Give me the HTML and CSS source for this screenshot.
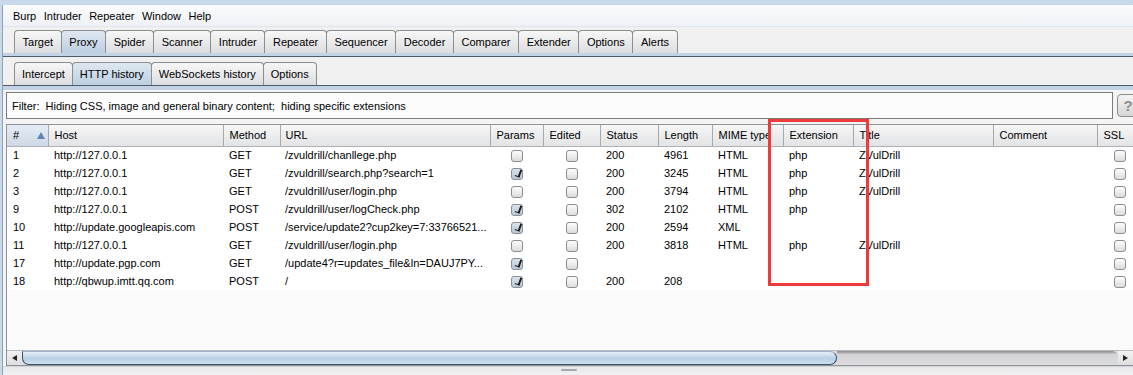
FILE: index.html
```html
<!DOCTYPE html>
<html lang="en">
<head>
    <meta charset="UTF-8">
    <title>Burp Suite - Proxy</title>
    <link rel="stylesheet" href="styles.css">
</head>
<body>
    <div class="frame">
        <div class="menubar">
            <span>Burp</span>
            <span>Intruder</span>
            <span>Repeater</span>
            <span>Window</span>
            <span>Help</span>
        </div>

        <div class="tabs main-tabs">
            <div class="tab">Target</div>
            <div class="tab active">Proxy</div>
            <div class="tab">Spider</div>
            <div class="tab">Scanner</div>
            <div class="tab">Intruder</div>
            <div class="tab">Repeater</div>
            <div class="tab">Sequencer</div>
            <div class="tab">Decoder</div>
            <div class="tab">Comparer</div>
            <div class="tab">Extender</div>
            <div class="tab">Options</div>
            <div class="tab">Alerts</div>
        </div>
        <div class="band band-main"></div>

        <div class="panel">
            <div class="tabs sub-tabs">
                <div class="tab">Intercept</div>
                <div class="tab active">HTTP history</div>
                <div class="tab">WebSockets history</div>
                <div class="tab">Options</div>
            </div>
            <div class="band band-sub"></div>

            <div class="filter-row">
                <div class="filter">Filter:&nbsp; Hiding CSS, image and general binary content;&nbsp; hiding specific extensions</div>
                <div class="help">?</div>
            </div>

            <div class="table-wrap">
                <div class="table-view">
                    <table class="history">
                        <colgroup>
                            <col class="c-num"><col class="c-host"><col class="c-method"><col class="c-url">
                            <col class="c-params"><col class="c-edited"><col class="c-status"><col class="c-length">
                            <col class="c-mime"><col class="c-ext"><col class="c-title"><col class="c-comment"><col class="c-ssl">
                        </colgroup>
                        <thead>
                            <tr>
                                <th class="sorted"># <span class="sort-arrow"></span></th>
                                <th>Host</th>
                                <th>Method</th>
                                <th class="url">URL</th>
                                <th>Params</th>
                                <th>Edited</th>
                                <th>Status</th>
                                <th>Length</th>
                                <th>MIME type</th>
                                <th>Extension</th>
                                <th>Title</th>
                                <th>Comment</th>
                                <th>SSL</th>
                            </tr>
                        </thead>
                        <tbody>
                            <tr>
                                <td>1</td><td>http://127.0.0.1</td><td>GET</td><td class="url">/zvuldrill/chanllege.php</td>
                                <td class="box"><span class="check"></span></td><td class="box"><span class="check"></span></td>
                                <td>200</td><td>4961</td><td>HTML</td><td>php</td><td>ZVulDrill</td><td></td>
                                <td class="box"><span class="check"></span></td>
                            </tr>
                            <tr>
                                <td>2</td><td>http://127.0.0.1</td><td>GET</td><td class="url">/zvuldrill/search.php?search=1</td>
                                <td class="box"><span class="check on"></span></td><td class="box"><span class="check"></span></td>
                                <td>200</td><td>3245</td><td>HTML</td><td>php</td><td>ZVulDrill</td><td></td>
                                <td class="box"><span class="check"></span></td>
                            </tr>
                            <tr>
                                <td>3</td><td>http://127.0.0.1</td><td>GET</td><td class="url">/zvuldrill/user/login.php</td>
                                <td class="box"><span class="check"></span></td><td class="box"><span class="check"></span></td>
                                <td>200</td><td>3794</td><td>HTML</td><td>php</td><td>ZVulDrill</td><td></td>
                                <td class="box"><span class="check"></span></td>
                            </tr>
                            <tr>
                                <td>9</td><td>http://127.0.0.1</td><td>POST</td><td class="url">/zvuldrill/user/logCheck.php</td>
                                <td class="box"><span class="check on"></span></td><td class="box"><span class="check"></span></td>
                                <td>302</td><td>2102</td><td>HTML</td><td>php</td><td></td><td></td>
                                <td class="box"><span class="check"></span></td>
                            </tr>
                            <tr>
                                <td>10</td><td>http://update.googleapis.com</td><td>POST</td><td class="url">/service/update2?cup2key=7:33766521...</td>
                                <td class="box"><span class="check on"></span></td><td class="box"><span class="check"></span></td>
                                <td>200</td><td>2594</td><td>XML</td><td></td><td></td><td></td>
                                <td class="box"><span class="check"></span></td>
                            </tr>
                            <tr>
                                <td>11</td><td>http://127.0.0.1</td><td>GET</td><td class="url">/zvuldrill/user/login.php</td>
                                <td class="box"><span class="check"></span></td><td class="box"><span class="check"></span></td>
                                <td>200</td><td>3818</td><td>HTML</td><td>php</td><td>ZVulDrill</td><td></td>
                                <td class="box"><span class="check"></span></td>
                            </tr>
                            <tr>
                                <td>17</td><td>http://update.pgp.com</td><td>GET</td><td class="url">/update4?r=updates_file&amp;ln=DAUJ7PY...</td>
                                <td class="box"><span class="check on"></span></td><td class="box"><span class="check"></span></td>
                                <td></td><td></td><td></td><td></td><td></td><td></td>
                                <td class="box"><span class="check"></span></td>
                            </tr>
                            <tr>
                                <td>18</td><td>http://qbwup.imtt.qq.com</td><td>POST</td><td class="url">/</td>
                                <td class="box"><span class="check on"></span></td><td class="box"><span class="check"></span></td>
                                <td>200</td><td>208</td><td></td><td></td><td></td><td></td>
                                <td class="box"><span class="check"></span></td>
                            </tr>
                        </tbody>
                    </table>
                </div>
                <div class="hscroll">
                    <div class="arrow left"></div>
                    <div class="thumb"></div>
                    <div class="track"></div>
                    <div class="arrow right"></div>
                </div>
            </div>

            <div class="divider"><span class="grip"></span></div>
        </div>

        <div class="highlight"></div>
    </div>
</body>
</html>
```

FILE: styles.css
```css
* {
    margin: 0;
    padding: 0;
    box-sizing: border-box;
}

body {
    font-family: "Liberation Sans", Arial, sans-serif;
    font-size: 11px;
    color: #000;
    background: #c9d9ec;
    width: 1133px;
    height: 375px;
    overflow: hidden;
}

.frame {
    position: relative;
    margin: 5px 0 0 2px;
    height: 370px;
    border-left: 1px solid #8fa0b2;
    background: #f0f0f0;
    display: flex;
    flex-direction: column;
}

/* menu bar */
.menubar {
    height: 22px;
    display: flex;
    align-items: center;
    gap: 7.5px;
    padding-left: 10px;
    background: linear-gradient(to bottom, #fbfcfd, #eef1f5);
    border-bottom: 1px solid #e1e5ea;
}

/* tabs */
.tabs {
    display: flex;
    align-items: flex-end;
    padding-left: 11px;
}

.main-tabs {
    height: 26px;
    background: #f0f0f0;
}

.sub-tabs {
    height: 28px;
    background: #f0f0f0;
}

.tab {
    height: 23px;
    padding: 0 7px;
    display: flex;
    align-items: center;
    border: 1px solid #8a8d91;
    border-bottom: none;
    border-radius: 4px 4px 0 0;
    background: linear-gradient(to bottom, #f7f7f7, #dcdde0);
    margin-right: -1px;
}

.main-tabs .tab {
    padding: 0 7.6px;
}

.tab.active {
    background: linear-gradient(to bottom, #dfe8f1, #bccfe2);
    position: relative;
    z-index: 1;
}

.band {
    height: 4px;
    background: #c2d3e5;
}

.band-main {
    border-bottom: 1px solid #4f5d6b;
}

.band-sub {
    border-top: 1px solid #4f5d6b;
    height: 5px;
}

.panel {
    flex: 1;
    display: flex;
    flex-direction: column;
    background: #f4f4f4;
}

/* filter */
.filter-row {
    display: flex;
    align-items: center;
    gap: 4px;
    padding: 1px 0 0 3px;
    height: 30px;
}

.filter {
    width: 1107px;
    height: 27px;
    padding-left: 5px;
    display: flex;
    align-items: center;
    background: #fcfcfc;
    border: 1px solid #7b7b7b;
    flex-shrink: 0;
}

.help {
    width: 22px;
    height: 23px;
    flex-shrink: 0;
    border: 1px solid #8c8c8c;
    border-radius: 4px;
    background: linear-gradient(to bottom, #f4f4f4, #d6d6d6);
    color: #8d8d8d;
    font-size: 15px;
    font-weight: bold;
    text-align: center;
    line-height: 21px;
}

/* table */
.table-wrap {
    margin: 4px 0 0 3px;
    border-left: 1px solid #8f9297;
    border-top: 1px solid #8f9297;
    display: flex;
    flex-direction: column;
    height: 242px;
    overflow: hidden;
}

.table-view {
    flex: 1;
    background: #fafafa;
    overflow: hidden;
}

.history {
    border-collapse: collapse;
    table-layout: fixed;
    width: 1160px;
}

.c-num { width: 41px; }
.c-host { width: 175px; }
.c-method { width: 57px; }
.c-url { width: 210px; }
.c-params { width: 53px; }
.c-edited { width: 57px; }
.c-status { width: 58px; }
.c-length { width: 54px; }
.c-mime { width: 71px; }
.c-ext { width: 70px; }
.c-title { width: 140px; }
.c-comment { width: 104px; }
.c-ssl { width: 120px; }

.history th {
    height: 21px;
    font-weight: normal;
    text-align: left;
    padding-left: 6px;
    background: linear-gradient(to bottom, #f6f6f6, #e2e3e5);
    border-right: 1px solid #a7a9ad;
    border-bottom: 1px solid #aeb1b5;
    white-space: nowrap;
    overflow: hidden;
}

.history th.sorted {
    background: linear-gradient(to bottom, #e6edf4, #ccd8e5);
    position: relative;
}

.sort-arrow {
    position: absolute;
    left: 30px;
    top: 7px;
    border-left: 4px solid transparent;
    border-right: 4px solid transparent;
    border-bottom: 7px solid #5f87b3;
}

.history td {
    height: 18px;
    padding-left: 6px;
    background: #fff;
    white-space: nowrap;
    overflow: hidden;
    text-overflow: ellipsis;
}

.history .url {
    padding-left: 5px;
}

.history td.box {
    padding: 0;
    text-align: center;
}

.history td:last-child.box {
    text-align: left;
    padding-left: 17px;
}

.check {
    display: inline-block;
    width: 12px;
    height: 12px;
    vertical-align: middle;
    border: 1px solid #8b8e92;
    border-radius: 3px;
    background: linear-gradient(to bottom, #fdfdfd, #dcdcdc);
    position: relative;
}

.check.on {
    background: linear-gradient(to bottom, #d9e2ec, #b7c6d6);
}

.check.on::after {
    content: "";
    position: absolute;
    left: 4px;
    top: 0;
    width: 3px;
    height: 7px;
    border-right: 2px solid #1b1b1b;
    border-bottom: 1px solid #1b1b1b;
    transform: rotate(20deg);
}

/* horizontal scrollbar */
.hscroll {
    height: 16px;
    display: flex;
    border-top: 1px solid #b7bcc2;
    border-bottom: 1px solid #8f9297;
    background: #dadcdf;
}

.arrow {
    width: 15px;
    position: relative;
    background: linear-gradient(to bottom, #f2f2f2, #dedede);
}

.arrow.left::after,
.arrow.right::after {
    content: "";
    position: absolute;
    top: 4px;
    border-top: 3px solid transparent;
    border-bottom: 3px solid transparent;
}

.arrow.left::after {
    left: 5px;
    border-right: 5px solid #222;
}

.arrow.right::after {
    left: 5px;
    border-left: 5px solid #222;
}

.thumb {
    width: 815px;
    border: 1px solid #3d4f63;
    border-top-color: #9eb3c8;
    border-radius: 0 8px 8px 8px;
    background: linear-gradient(to bottom, #e6eef6, #b7cfe6 55%, #cfe0f0);
}

.track {
    flex: 1;
    border-radius: 0 6px 6px 0;
    background: linear-gradient(to bottom, #8a8a8a, #d4d4d6 25%, #dcdcde);
}

.divider {
    flex: 1;
    background: linear-gradient(to bottom, #e6e8eb, #f1f1f1);
    border-top: 1px solid #d0d3d7;
    position: relative;
}

.grip {
    position: absolute;
    left: 558px;
    top: 2px;
    width: 16px;
    height: 2px;
    background: #a4a7ab;
    border-radius: 1px;
}

/* red annotation box */
.highlight {
    position: absolute;
    left: 765px;
    top: 114px;
    width: 101px;
    height: 167px;
    border: 3px solid #ee3a3a;
    pointer-events: none;
}
```
